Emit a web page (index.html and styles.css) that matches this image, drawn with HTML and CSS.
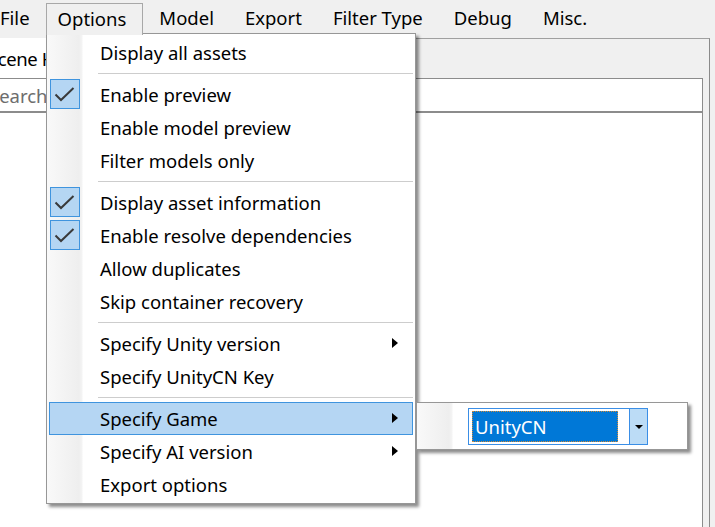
FILE: index.html
```html
<!DOCTYPE html>
<html>
<head>
<meta charset="utf-8">
<link rel="stylesheet" href="styles.css">
</head>
<body>
<div class="app">
  <div class="menubar">
    <span class="mi first">File</span>
    <span class="mi open">Options</span>
    <span class="mi">Model</span>
    <span class="mi">Export</span>
    <span class="mi">Filter Type</span>
    <span class="mi">Debug</span>
    <span class="mi">Misc.</span>
  </div>
  <div class="workspace">
    <div class="panel">
      <div class="tabstrip"><div class="tab">Scene Hierarchy</div></div>
      <div class="search">Search</div>
      <div class="list"></div>
    </div>
  </div>

  <div class="dropdown">
    <div class="item"><span class="chk"></span><span class="label">Display all assets</span></div>
    <div class="sep"></div>
    <div class="item"><span class="chk on"><svg viewBox="0 0 28 28" width="28" height="28"><path d="M4.5 14.5 L10 20 L22.5 8" fill="none" stroke="#3a3a3a" stroke-width="2"/></svg></span><span class="label">Enable preview</span></div>
    <div class="item"><span class="chk"></span><span class="label">Enable model preview</span></div>
    <div class="item"><span class="chk"></span><span class="label">Filter models only</span></div>
    <div class="sep"></div>
    <div class="item"><span class="chk on"><svg viewBox="0 0 28 28" width="28" height="28"><path d="M4.5 14.5 L10 20 L22.5 8" fill="none" stroke="#3a3a3a" stroke-width="2"/></svg></span><span class="label">Display asset information</span></div>
    <div class="item"><span class="chk on"><svg viewBox="0 0 28 28" width="28" height="28"><path d="M4.5 14.5 L10 20 L22.5 8" fill="none" stroke="#3a3a3a" stroke-width="2"/></svg></span><span class="label">Enable resolve dependencies</span></div>
    <div class="item"><span class="chk"></span><span class="label">Allow duplicates</span></div>
    <div class="item"><span class="chk"></span><span class="label">Skip container recovery</span></div>
    <div class="sep"></div>
    <div class="item"><span class="chk"></span><span class="label">Specify Unity version</span><span class="arrow"></span></div>
    <div class="item"><span class="chk"></span><span class="label">Specify UnityCN Key</span></div>
    <div class="sep"></div>
    <div class="item hot"><span class="chk"></span><span class="label">Specify Game</span><span class="arrow"></span></div>
    <div class="item"><span class="chk"></span><span class="label">Specify AI version</span><span class="arrow"></span></div>
    <div class="item"><span class="chk"></span><span class="label">Export options</span></div>
  </div>

  <div class="submenu">
    <div class="combo">
      <div class="combo-text"><span class="combo-sel">UnityCN</span></div>
      <div class="combo-btn"><span class="down"></span></div>
    </div>
  </div>
</div>
</body>
</html>
```
FILE: styles.css
```css
* { box-sizing: border-box; }
html, body { margin: 0; padding: 0; }
body {
  width: 715px;
  height: 527px;
  overflow: hidden;
  background: #f0f0f0;
  font-family: "Noto Sans", "Open Sans", sans-serif;
  font-size: 18.5px;
  color: #000;
}
.app {
  position: relative;
  width: 715px;
  height: 527px;
  overflow: hidden;
}
.menubar {
  height: 34px;
  display: flex;
  align-items: stretch;
  background: #f0f0f0;
  padding-top: 3px;
}
.mi {
  display: flex;
  align-items: center;
  padding: 0 14px 3px 15px;
  border: 1px solid transparent;
  border-bottom: none;
  white-space: nowrap;
}
.mi.first { margin-left: -16px; padding-right: 15px; }
.mi.open {
  border-color: #a8a8a8;
  padding-left: 11px;
  padding-right: 16px;
  position: relative;
  z-index: 3;
  background: #f0f0f0;
  margin-bottom: -1px;
}
.workspace {
  padding-top: 4px;
  height: 493px;
}
.panel {
  margin-left: -12px;
  width: 722px;
  height: 500px;
  border-top: 1px solid #a0a0a0;
  border-right: 1px solid #8a8a8a;
  display: flex;
  flex-direction: column;
  padding-right: 6px;
}
.tabstrip {
  height: 39px;
  display: flex;
  background: #f0f0f0;
}
.tab {
  background: #fff;
  width: 200px;
  display: flex;
  align-items: center;
  padding-left: 0;
  margin-top: -1px;
  height: 40px;
  white-space: nowrap;
  letter-spacing: -0.4px;
}
.search {
  height: 35px;
  background: #fff;
  border-top: 1px solid #8c8c8c;
  border-bottom: 2px solid #8c8c8c;
  border-right: 1px solid #8c8c8c;
  color: #6d6d6d;
  display: flex;
  align-items: center;
  padding-left: 1px;
}
.list {
  flex: 1;
  background: #fff;
  border-right: 1px solid #8c8c8c;
}

/* dropdown menu */
.dropdown {
  position: absolute;
  left: 46px;
  top: 33px;
  width: 370px;
  height: 471px;
  border: 1px solid #979797;
  background: linear-gradient(to right, #f9f9f9 0, #eeeeee 32px, #f4f4f4 35px, #fff 36px);
  padding: 2px 2px;
  box-shadow: 3px 3px 3px rgba(0, 0, 0, 0.45);
  z-index: 2;
}
.item {
  height: 33px;
  display: flex;
  align-items: center;
  border: 1px solid transparent;
  white-space: nowrap;
  padding-bottom: 1px;
}
.item.hot {
  background: #b5d6f3;
  border-color: #3f94de;
}
.chk {
  width: 30px;
  height: 30px;
  flex: none;
  display: flex;
  align-items: center;
  justify-content: center;
}
.chk.on {
  background: #b5d6f3;
  border: 1px solid #3f94de;
}
.label {
  margin-left: 20px;
  flex: 1;
}
.arrow {
  width: 0;
  height: 0;
  border-left: 6px solid #000;
  border-top: 5px solid transparent;
  border-bottom: 5px solid transparent;
  margin-right: 14px;
}
.sep {
  height: 9px;
  margin-left: 49px;
  display: flex;
  flex-direction: column;
  justify-content: center;
}
.sep::before {
  content: "";
  display: block;
  height: 1px;
  background: #cdcdcd;
}
.sep::after {
  content: "";
  display: block;
  height: 1px;
  background: #fff;
}

/* submenu */
.submenu {
  position: absolute;
  left: 416px;
  top: 402px;
  width: 272px;
  height: 48px;
  border: 1px solid #979797;
  background: linear-gradient(to right, #f9f9f9 0, #eeeeee 32px, #f4f4f4 35px, #fff 36px);
  box-shadow: 3px 3px 3px rgba(0, 0, 0, 0.45);
  padding: 5px 0 0 51px;
  z-index: 4;
}
.combo {
  width: 180px;
  height: 37px;
  border: 1px solid #3a8ee6;
  background: #fff;
  display: flex;
  align-items: stretch;
}
.combo-text {
  flex: 1;
  padding: 2px 11px 2px 3px;
  display: flex;
}
.combo-sel {
  flex: 1;
  background: #0078d7;
  color: #fff;
  outline: 1px dotted #d08a3a;
  outline-offset: -1px;
  display: flex;
  align-items: center;
  padding-left: 3px;
}
.combo-btn {
  width: 18px;
  background: #bcdcf6;
  border-left: 1px solid #3a8ee6;
  display: flex;
  align-items: center;
  justify-content: center;
}
.down {
  width: 0;
  height: 0;
  border-top: 4px solid #000;
  border-left: 4px solid transparent;
  border-right: 4px solid transparent;
}
```
